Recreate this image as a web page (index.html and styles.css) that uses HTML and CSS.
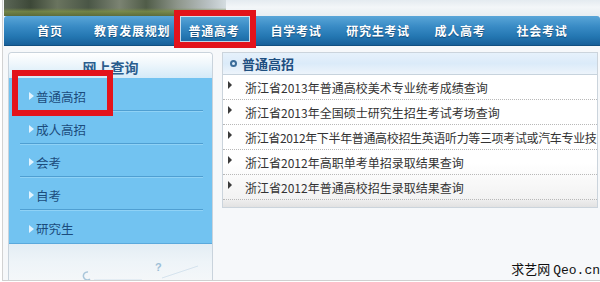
FILE: index.html
```html
<!DOCTYPE html>
<html lang="zh-CN">
<head>
<meta charset="utf-8">
<title>普通高招</title>
<link rel="stylesheet" href="styles.css">
</head>
<body>
<div class="frame">
  <div class="banner">
    <div class="photo"></div>
    <div class="sky"></div>
  </div>
  <nav class="nav">
    <a class="nav-item">首页</a>
    <a class="nav-item">教育发展规划</a>
    <a class="nav-item is-marked">普通高考</a>
    <a class="nav-item">自学考试</a>
    <a class="nav-item">研究生考试</a>
    <a class="nav-item">成人高考</a>
    <a class="nav-item">社会考试</a>
  </nav>
  <div class="content">
    <aside class="side">
      <div class="side-head">网上查询</div>
      <ul class="side-list">
        <li class="side-item is-marked"><span class="side-arrow"></span>普通高招</li>
        <li class="side-item"><span class="side-arrow"></span>成人高招</li>
        <li class="side-item"><span class="side-arrow"></span>会考</li>
        <li class="side-item"><span class="side-arrow"></span>自考</li>
        <li class="side-item"><span class="side-arrow"></span>研究生</li>
      </ul>
      <div class="side-foot">
        <svg class="side-deco" width="120" height="22" viewBox="0 0 120 22">
          <path d="M6 12 a4 4 0 1 0 2 7" fill="none" stroke="#a9c6da" stroke-width="1.5"/>
          <path d="M12 20 L60 20 M80 18 L116 6" fill="none" stroke="#d5e3ee" stroke-width="1"/>
        </svg>
        <span class="side-q">?</span>
      </div>
    </aside>
    <section class="main">
      <div class="main-head"><span class="ring"></span>普通高招</div>
      <ul class="rows">
        <li class="row"><span class="tri"></span>浙江省2013年普通高校美术专业统考成绩查询</li>
        <li class="row"><span class="tri"></span>浙江省2013年全国硕士研究生招生考试考场查询</li>
        <li class="row"><span class="tri"></span><span class="row-text">浙江省2012年下半年普通高校招生英语听力等三项考试或汽车专业技</span></li>
        <li class="row"><span class="tri"></span>浙江省2012年高职单考单招录取结果查询</li>
        <li class="row"><span class="tri"></span>浙江省2012年普通高校招生录取结果查询</li>
      </ul>
      <div class="main-foot"></div>
    </section>
  </div>
  <div class="watermark">求艺网 <span class="mono">Qeo.cn</span></div>
</div>
</body>
</html>
```

FILE: styles.css
```css
*, *::before, *::after { box-sizing: border-box; margin: 0; padding: 0; }
html, body { background: #ffffff; }
body {
  font-family: "Noto Sans CJK SC", "Liberation Sans", sans-serif;
  font-size: 12px;
  color: #333;
}
ul { list-style: none; }

.frame {
  position: relative;
  margin-left: 2px;
  width: 598px;
  height: 281px;
  border-left: 1px solid #d2d2d2;
  border-bottom: 1px solid #d0d0d0;
  background: #f6f8fa;
  overflow: hidden;
}

/* banner */
.banner {
  display: flex;
  height: 16px;
  margin-left: 1px;
}
.photo {
  width: 222px;
  background:
    linear-gradient(to bottom, rgba(0,0,0,0) 0%, rgba(0,0,0,0) 50%, rgba(120,138,70,0.85) 72%, rgba(92,108,58,0.95) 100%),
    linear-gradient(to right, #5b6656 0%, #3d4838 12%, #6a745f 24%, #4a5646 38%, #7b8372 52%, #505c48 64%, #8d958a 78%, #b8c0c2 92%, #d4dce0 100%);
}
.sky {
  flex: 1;
  background: linear-gradient(to bottom, #e4ebf0 0%, #f3f6f8 45%, #e8eef2 100%);
}

/* nav */
.nav {
  display: flex;
  height: 30px;
  margin-left: 1px;
  padding-left: 5px;
  background: linear-gradient(to bottom, #5aa6d8 0%, #3a8cc6 35%, #2477b2 70%, #18609a 100%);
  border-bottom: 1px solid #124f80;
  border-radius: 3px 3px 0 0;
}
.nav-item {
  position: relative;
  width: 82px;
  display: flex;
  align-items: center;
  justify-content: center;
  color: #ffffff;
  font-weight: bold;
  font-size: 12px;
  letter-spacing: 0.7px;
  text-shadow: 0 1px 1px rgba(0,40,80,0.6);
  white-space: nowrap;
}
.nav-item.is-marked::after {
  content: "";
  position: absolute;
  left: 1px;
  right: -1px;
  top: -6px;
  bottom: -3px;
  border: 6px solid #e3131b;
  box-shadow: inset 0 0 0 1px rgba(235,240,245,0.8);
}

/* content */
.content {
  display: flex;
  align-items: flex-start;
  gap: 9px;
  padding: 6px 0 0 5px;
  height: 234px;
}

/* side panel */
.side {
  position: relative;
  width: 205px;
  height: 228px;
  display: flex;
  flex-direction: column;
  border: 1px solid #c9d3dc;
  border-bottom: none;
  border-radius: 4px 4px 0 0;
  background: #ffffff;
}
.side-head {
  height: 25px;
  display: flex;
  align-items: center;
  justify-content: center;
  padding-top: 3px;
  font-size: 14px;
  font-weight: bold;
  color: #2a5d8e;
  background: linear-gradient(to bottom, #ffffff 0%, #f0f7fc 40%, #d4eaf8 100%);
  border-radius: 4px 4px 0 0;
}
.side-list {
  background: #72c3f1;
  border-bottom: 1px solid #5aa9dc;
}
.side-item {
  position: relative;
  height: 33px;
  margin: 0 9px 0 11px;
  padding: 4px 0 0 9px;
  display: flex;
  align-items: center;
  font-size: 12.5px;
  color: #1c4c7c;
  border-bottom: 1px solid #4f9fd2;
  box-shadow: 0 1px 0 #8fd2f6;
}
.side-item:last-child {
  border-bottom: none;
  box-shadow: none;
}
.side-arrow {
  width: 0;
  height: 0;
  margin-right: 2px;
  border-top: 4px solid transparent;
  border-bottom: 4px solid transparent;
  border-left: 5px solid #e2f4ff;
}
.side-item.is-marked::after {
  content: "";
  position: absolute;
  left: -8px;
  top: -8px;
  width: 101px;
  height: 46px;
  border: 6px solid #e3131b;
}
.side-foot {
  position: relative;
  flex: 1;
  background: linear-gradient(to bottom, #e3edf4 0%, #eef4f8 50%, #f4f7f9 100%);
}
.side-deco {
  position: absolute;
  left: 73px;
  top: 16px;
}
.side-q {
  position: absolute;
  left: 146px;
  top: 17px;
  font-size: 11px;
  font-weight: bold;
  color: #9ebfd6;
  font-family: "Liberation Sans", sans-serif;
}

/* main panel */
.main {
  width: 376px;
  border: 1px solid #cbd4dc;
  background: #ffffff;
}
.main-head {
  height: 22px;
  display: flex;
  align-items: center;
  padding-left: 7px;
  font-size: 13px;
  font-weight: bold;
  color: #1e4f80;
  background: linear-gradient(to bottom, #e6f1fb 0%, #dbebf9 50%, #edf4fb 100%);
  border-bottom: 1px solid #c7d3dd;
}
.ring {
  width: 7px;
  height: 7px;
  margin-right: 5px;
  border: 2px solid #3a6c99;
  border-radius: 50%;
}
.rows {
  background: linear-gradient(to bottom, #ffffff 0%, #ffffff 70%, #f2f2f2 100%);
}
.row {
  height: 25px;
  display: flex;
  align-items: center;
  padding: 0 0 0 5px;
  white-space: nowrap;
  overflow: hidden;
  color: #333333;
  font-size: 12px;
  border-bottom: 1px dotted #b8b8b8;
}
.row-text {
  letter-spacing: -0.35px;
}
.tri {
  flex: none;
  width: 0;
  height: 0;
  margin: -4px 13px 0 0;
  border-top: 4px solid transparent;
  border-bottom: 4px solid transparent;
  border-left: 4px solid #3a3a3a;
}
.main-foot {
  height: 7px;
  background: linear-gradient(to bottom, #eeeeee, #e2e2e2);
}

/* watermark */
.watermark {
  position: absolute;
  right: 0;
  top: 259px;
  font-size: 13px;
  color: #111;
  white-space: nowrap;
}
.mono {
  font-family: "Liberation Mono", monospace;
  font-size: 13px;
}
```
